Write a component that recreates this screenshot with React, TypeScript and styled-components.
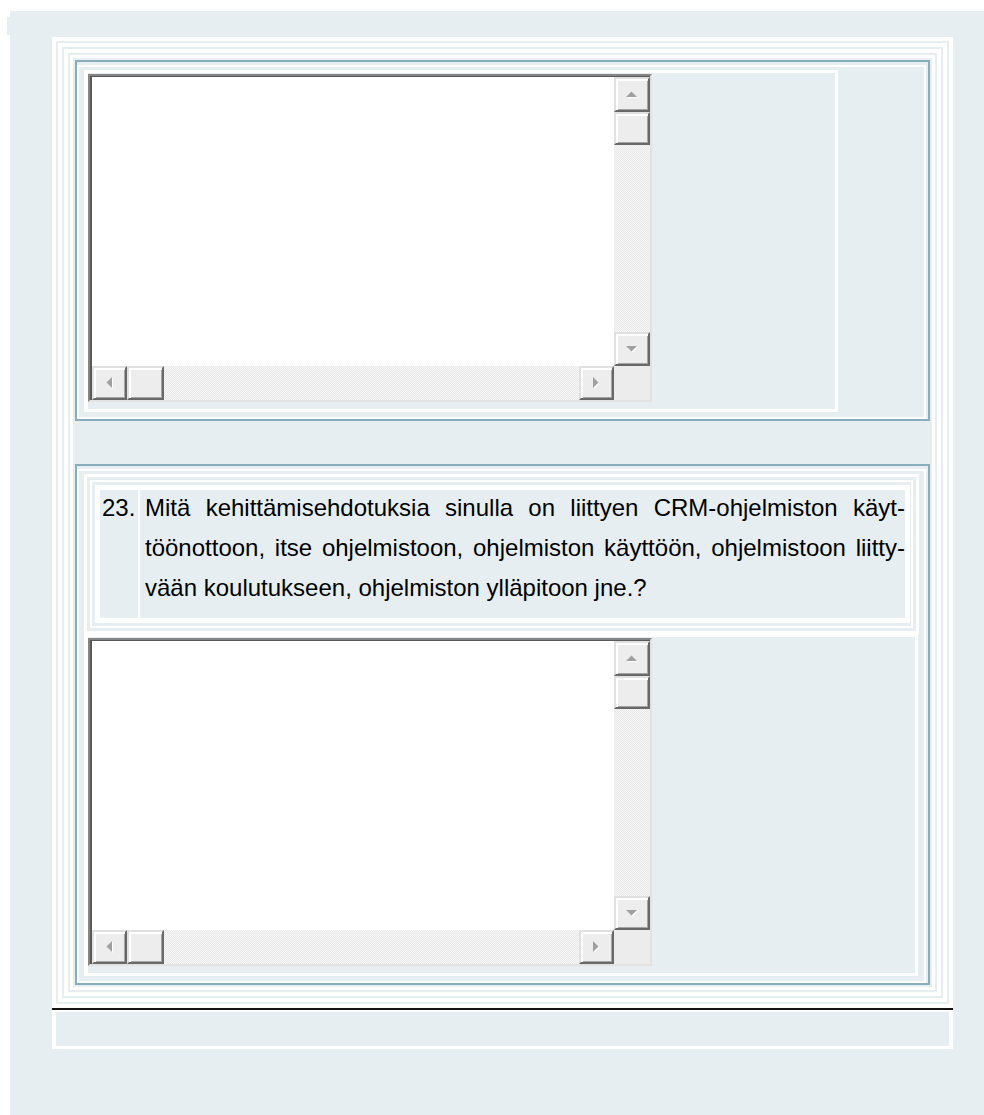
import React from 'react';
import styled, { createGlobalStyle } from 'styled-components';

const bg = '#e6eef1';
const frameBlue = '#88aebd';

const GlobalStyle = createGlobalStyle`
  html, body {
    margin: 0;
    padding: 0;
    background: #fff;
  }
  body {
    font-family: "Liberation Sans", Arial, sans-serif;
    color: #000;
  }
  * {
    box-sizing: border-box;
  }
`;

const Page = styled.div`
  position: relative;
  margin: 11px 0 0 10px;
  min-height: 1104px;
  padding: 26px 0 0 42px;
  background: ${bg};

  &::before {
    content: "";
    position: absolute;
    left: -3px;
    top: 6px;
    width: 3px;
    height: 18px;
    background: ${bg};
  }
`;

const Panel = styled.div`
  width: 901px;
  padding: 4px 4px 3px;
  background: #fff;
`;

const Ring = styled.div<{ $pad?: number }>`
  border: 2px solid ${bg};
  padding: ${p => p.$pad ?? 4}px;
  background: #fff;
`;

const Sheet = styled.div`
  display: flex;
  flex-direction: column;
  gap: 43px;
  padding: 2px;
  background: ${bg};
`;

const BlueBox = styled.div`
  border: 2px solid ${frameBlue};
  padding: 3px 2px 0 0;
`;

const Frame = styled.div`
  border: 2px solid #fff;
  padding: 3px 5px 5px;
`;

/* question text block */
const QuestionOuter = styled.div`
  border: 3px solid #fff;
  padding: 3px;
`;

const QuestionInner = styled.div`
  border: 2px solid #fff;
  padding: 3px 1px 3px 3px;
`;

const QuestionRow = styled.div`
  display: grid;
  grid-template-columns: 38px 1fr;
  gap: 2px;
  border: 5px solid #fff;
  background: #fff;
  font-size: 24px;
`;

const NumberCell = styled.div`
  background: ${bg};
  padding-left: 2px;
  line-height: 36px;
`;

const TextCell = styled.div`
  background: ${bg};
  padding: 0 0 8px 5px;
`;

const Line = styled.div<{ $last?: boolean }>`
  height: 40px;
  line-height: 36px;
  white-space: nowrap;
  text-align: justify;
  text-align-last: ${p => (p.$last ? 'left' : 'justify')};
`;

/* answer field */
const AnswerCell = styled.div<{ $width: number }>`
  width: ${p => p.$width}px;
  border: 3px solid #fff;
  border-left-width: 4px;
  padding: 1px 0 7px;
`;

const TextBox = styled.div`
  width: 564px;
  border: 2px solid;
  border-color: #858585 #e2e2e2 #e2e2e2 #858585;
`;

const Well = styled.div`
  display: grid;
  grid-template-columns: 1fr 36px;
  grid-template-rows: 1fr 34px;
  height: 324px;
  border-top: 1px solid #595959;
  border-left: 2px solid #595959;
  background: #fff;
`;

const VScroll = styled.div`
  display: flex;
  flex-direction: column;
`;

const HScroll = styled.div`
  display: flex;
`;

const ScrollButton = styled.div<{ $w?: number; $h?: number }>`
  display: flex;
  align-items: center;
  justify-content: center;
  flex: none;
  width: ${p => (p.$w ? `${p.$w}px` : 'auto')};
  height: ${p => (p.$h ? `${p.$h}px` : 'auto')};
  background: #ededed;
  border: 2px solid;
  border-color: #e0e0e0 #686868 #686868 #e0e0e0;
  box-shadow: inset 2px 2px 0 #fff, inset -1px -1px 0 #a4a4a4;
`;

const Track = styled.div`
  flex: 1;
  background: repeating-conic-gradient(#e8e8e8 0% 25%, #f7f7f7 0% 50%) 0 0 / 2px 2px;
`;

const Corner = styled.div`
  background: #ececec;
`;

const Rule = styled.div`
  height: 2px;
  margin: 4px -4px 0;
  background: #151515;
`;

const FooterRow = styled.div`
  height: 34px;
  margin-top: 2px;
  background: ${bg};
`;

type Dir = 'up' | 'down' | 'left' | 'right';

const arrowPoints: Record<Dir, string> = {
  up: '0,6 5.5,0.5 11,6',
  down: '0,0 11,0 5.5,5.5',
  left: '6,0 6,11 0.5,5.5',
  right: '0,0 0,11 5.5,5.5',
};

const Arrow = ({ dir }: { dir: Dir }) => {
  const vertical = dir === 'up' || dir === 'down';
  const w = vertical ? 12 : 7;
  const h = vertical ? 7 : 12;
  return (
    <svg width={w} height={h} viewBox={`0 0 ${w} ${h}`}>
      <polygon points={arrowPoints[dir]} fill="#fff" transform="translate(1 1)" />
      <polygon points={arrowPoints[dir]} fill="#a0a0a0" />
    </svg>
  );
};

const TextArea = () => (
  <TextBox>
    <Well>
      <div />
      <VScroll>
        <ScrollButton $h={35}>
          <Arrow dir="up" />
        </ScrollButton>
        <ScrollButton $h={33} />
        <Track />
        <ScrollButton $h={34}>
          <Arrow dir="down" />
        </ScrollButton>
      </VScroll>
      <HScroll>
        <ScrollButton $w={35}>
          <Arrow dir="left" />
        </ScrollButton>
        <ScrollButton $w={37} />
        <Track />
        <ScrollButton $w={35}>
          <Arrow dir="right" />
        </ScrollButton>
      </HScroll>
      <Corner />
    </Well>
  </TextBox>
);

const questionLines = [
  'Mitä kehittämisehdotuksia sinulla on liittyen CRM-ohjelmiston käyt-',
  'töönottoon, itse ohjelmistoon, ohjelmiston käyttöön, ohjelmistoon liitty-',
  'vään koulutukseen, ohjelmiston ylläpitoon jne.?',
];

export default function App() {
  return (
    <>
      <GlobalStyle />
      <Page>
        <Panel>
          <Ring>
            <Ring>
              <Ring $pad={3}>
                <Sheet>
                  <BlueBox>
                    <Frame>
                      <AnswerCell $width={754}>
                        <TextArea />
                      </AnswerCell>
                    </Frame>
                  </BlueBox>

                  <BlueBox>
                    <Frame>
                      <QuestionOuter>
                        <QuestionInner>
                          <QuestionRow>
                            <NumberCell>23.</NumberCell>
                            <TextCell>
                              {questionLines.map((line, i) => (
                                <Line key={i} $last={i === questionLines.length - 1}>
                                  {line}
                                </Line>
                              ))}
                            </TextCell>
                          </QuestionRow>
                        </QuestionInner>
                      </QuestionOuter>
                      <AnswerCell $width={834}>
                        <TextArea />
                      </AnswerCell>
                    </Frame>
                  </BlueBox>
                </Sheet>
              </Ring>
            </Ring>
          </Ring>
          <Rule />
          <FooterRow />
        </Panel>
      </Page>
    </>
  );
}
